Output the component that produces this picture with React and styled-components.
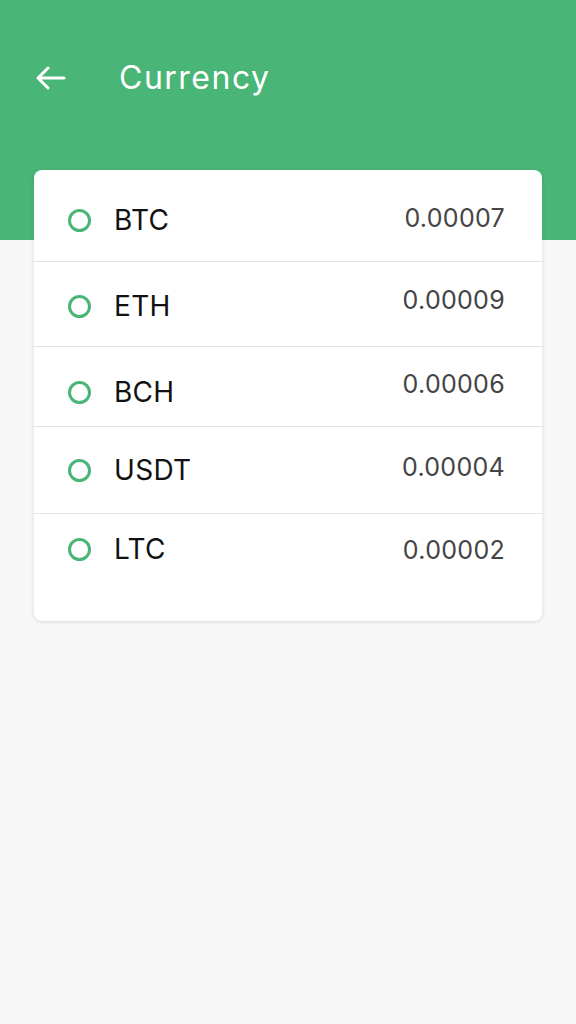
import React from 'react';
import styled, { createGlobalStyle } from 'styled-components';

const GlobalStyle = createGlobalStyle`
  html, body {
    margin: 0;
    padding: 0;
    background: #f7f7f7;
    font-family: 'Inter', 'Noto Sans', sans-serif;
  }
`;

const Page = styled.div`
  min-height: 1024px;
  background: #f7f7f7;
`;

const Header = styled.header`
  height: 240px;
  background: #49b576;
  box-sizing: border-box;
  padding: 58px 0 0 34px;
`;

const TopBar = styled.div`
  display: flex;
  align-items: center;
  height: 40px;
`;

const BackButton = styled.button`
  display: flex;
  align-items: center;
  justify-content: center;
  width: 32px;
  height: 40px;
  padding: 0;
  border: none;
  background: none;
  cursor: pointer;
`;

const Title = styled.h1`
  margin: 0 0 0 53px;
  color: #fff;
  font-size: 32px;
  font-weight: 400;
  letter-spacing: 1.5px;
  line-height: 40px;
`;

const Card = styled.ul`
  list-style: none;
  margin: -70px 34px 0 34px;
  padding: 0;
  background: #fff;
  border-radius: 8px;
  box-shadow: 0 1px 4px rgba(0, 0, 0, 0.12);
  overflow: hidden;
`;

const Row = styled.li`
  display: flex;
  justify-content: space-between;
  align-items: flex-start;
  box-sizing: border-box;
  height: ${(p) => p.$h}px;
  padding: 0 37px 0 34px;
  border-bottom: ${(p) => (p.$last ? 'none' : '1px solid #e2e2e2')};
`;

const Coin = styled.div`
  display: flex;
  align-items: center;
  gap: 23px;
  height: 30px;
  margin-top: ${(p) => p.$top - 15}px;
`;

const Radio = styled.span`
  width: 17px;
  height: 17px;
  border: 3px solid #49b576;
  border-radius: 50%;
`;

const Label = styled.span`
  font-size: 28px;
  color: #111;
  line-height: 30px;
  letter-spacing: 0.3px;
`;

const Value = styled.span`
  margin-top: ${(p) => p.$top - 15}px;
  font-size: 25px;
  line-height: 30px;
  color: #444;
  letter-spacing: 0.3px;
`;

const coins = [
  { name: 'BTC', value: '0.00007', h: 92, top: 50, vTop: 48 },
  { name: 'ETH', value: '0.00009', h: 85, top: 44, vTop: 38 },
  { name: 'BCH', value: '0.00006', h: 80, top: 45, vTop: 37 },
  { name: 'USDT', value: '0.00004', h: 87, top: 43, vTop: 40 },
  { name: 'LTC', value: '0.00002', h: 107, top: 35, vTop: 36 },
];

const App = () => (
  <Page>
    <GlobalStyle />
    <Header>
      <TopBar>
        <BackButton aria-label="Back">
          <svg width="31" height="24" viewBox="0 0 31 24" fill="none">
            <path
              d="M29 12H3M13 2L3 12l10 10"
              stroke="#fff"
              strokeWidth="3"
              strokeLinecap="round"
              strokeLinejoin="round"
            />
          </svg>
        </BackButton>
        <Title>Currency</Title>
      </TopBar>
    </Header>
    <Card>
      {coins.map((c, i) => (
        <Row key={c.name} $h={c.h} $last={i === coins.length - 1}>
          <Coin $top={c.top}>
            <Radio />
            <Label>{c.name}</Label>
          </Coin>
          <Value $top={c.vTop}>{c.value}</Value>
        </Row>
      ))}
    </Card>
  </Page>
);

export default App;
